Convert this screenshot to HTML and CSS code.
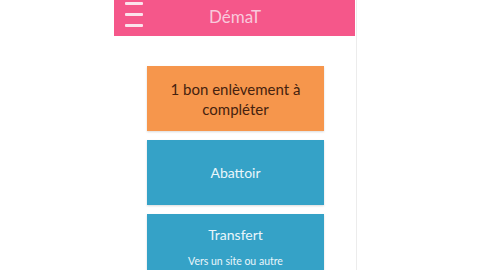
FILE: index.html
```html
<!DOCTYPE html>
<html lang="fr">
<head>
<meta charset="utf-8">
<link rel="stylesheet" href="styles.css">
</head>
<body>
<div class="phone">
  <header class="topbar">
    <div class="burger"><span></span><span></span><span></span></div>
    <div class="title">DémaT</div>
  </header>
  <main class="menu">
    <div class="tile orange"><span class="big">1 bon enlèvement à<br>compléter</span></div>
    <div class="tile blue"><span class="mid">Abattoir</span></div>
    <div class="tile blue top"><span class="mid">Transfert</span><span class="small">Vers un site ou autre</span></div>
  </main>
</div>
</body>
</html>
```
FILE: styles.css
```css
html, body { margin: 0; padding: 0; background: #ffffff; }
body { font-family: Lato, "Open Sans", sans-serif; overflow: hidden; height: 270px; }
.phone {
  margin-left: 114px;
  width: 242px;
  height: 270px;
  overflow: hidden;
  border-right: 1px solid #ececec;
  display: flex;
  flex-direction: column;
}
.topbar {
  flex-shrink: 0;
  height: 36px;
  width: 241px;
  background: #f5578a;
  display: flex;
  align-items: center;
}
.burger {
  margin-left: 11px;
  width: 18px;
  display: flex;
  flex-direction: column;
  gap: 8px;
  margin-top: -8px;
}
.burger span { display: block; height: 3px; background: #fbe3ec; border-radius: 1px; }
.title {
  flex: 1;
  text-align: center;
  color: #f9c9dc;
  font-size: 17px;
  margin-right: 28px;
  margin-top: -4px;
}
.menu {
  flex-shrink: 0;
  padding-top: 30px;
  display: flex;
  flex-direction: column;
  align-items: center;
  gap: 9px;
  padding-left: 1px;
}
.tile {
  flex-shrink: 0;
  width: 177px;
  height: 65px;
  display: flex;
  flex-direction: column;
  align-items: center;
  justify-content: center;
  text-align: center;
  box-shadow: 0 1px 2px rgba(0,0,0,0.15);
}
.orange { background: #f6964c; color: #45220f; }
.blue { background: #35a2c7; color: #eaf6fb; }
.top { justify-content: flex-start; padding-top: 12px; box-sizing: border-box; height: 56px; }
.big { font-size: 15px; line-height: 20px; }
.mid { font-size: 14px; line-height: 18px; }
.small { font-size: 10.5px; margin-top: 11px; }
```
